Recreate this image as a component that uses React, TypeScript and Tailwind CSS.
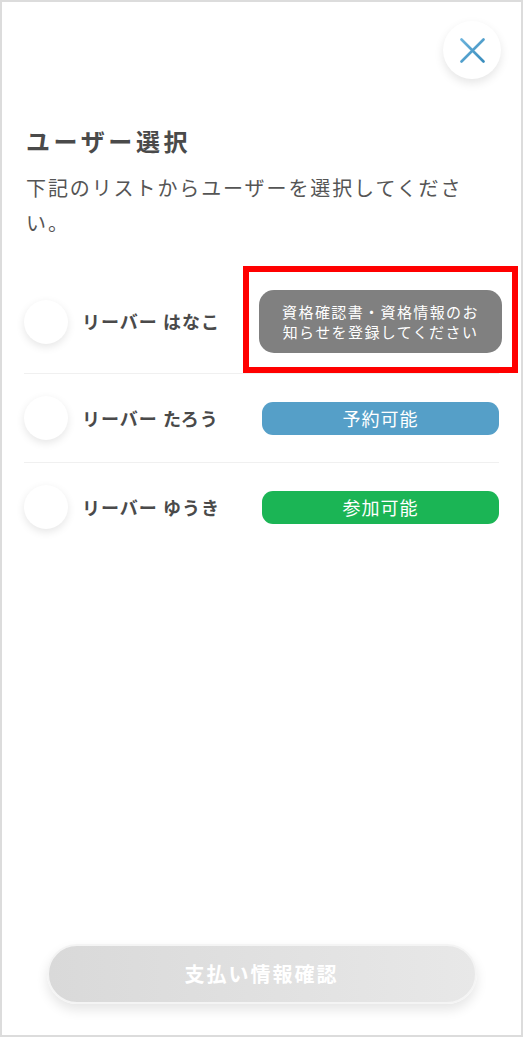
import React from "react";

const font = { fontFamily: '"Noto Sans CJK JP", "Noto Sans", sans-serif' };

function Radio() {
  return (
    <div className="w-[44px] h-[44px] shrink-0 rounded-full bg-white shadow-[0_3px_8px_rgba(0,0,0,0.10)]" />
  );
}

export default function App() {
  return (
    <div
      style={font}
      className="w-[523px] h-[1037px] border-2 border-[#dcdcdc] bg-white flex flex-col text-[#4a4a4a] overflow-hidden"
    >
      <div className="flex justify-end pt-[19px] pr-[20px]">
        <button className="w-[58px] h-[58px] rounded-full bg-white shadow-[0_4px_10px_rgba(0,0,0,0.10)] flex items-center justify-center">
          <svg width="25" height="25" viewBox="0 0 25 25">
            <defs>
              <linearGradient id="xg" x1="0" y1="0" x2="1" y2="1">
                <stop offset="0" stopColor="#6bb3dc" />
                <stop offset="1" stopColor="#3a8dbd" />
              </linearGradient>
            </defs>
            <path d="M1.5 1.5 L23.5 23.5 M23.5 1.5 L1.5 23.5" stroke="url(#xg)" strokeWidth="2.6" strokeLinecap="round" />
          </svg>
        </button>
      </div>

      <div className="px-[22px]">
        <h1 className="mt-[46px] text-[24px] leading-[32px] font-bold tracking-[3.6px] pl-[2px]">ユーザー選択</h1>
        <p className="mt-[13px] text-[20px] leading-[35px] tracking-[1.9px] max-w-[450px] text-[#555] pl-[2px]">
          下記のリストからユーザーを選択してください。
        </p>

        <div className="mt-[25px] flex flex-col">
          <div className="flex items-center pt-[25px] pb-[20px] border-b border-[#f0f0f0]">
            <Radio />
            <span className="ml-[14px] text-[18px] font-bold tracking-[1px] whitespace-nowrap">リーバー はなこ</span>
            <div className="ml-auto -mr-[3px] relative">
              <div className="w-[243px] h-[63px] rounded-[15px] bg-[#808080] text-white text-[15px] leading-[20px] tracking-[1.4px] flex items-center justify-center text-center px-[20px]">
                資格確認書・資格情報のお知らせを登録してください
              </div>
              <div className="absolute -left-[16px] -right-[16px] -top-[24px] -bottom-[20px] border-[6px] border-[#ff0000] pointer-events-none" />
            </div>
          </div>

          <div className="flex items-center py-[22px] border-b border-[#f0f0f0]">
            <Radio />
            <span className="ml-[14px] text-[18px] font-bold tracking-[1px] whitespace-nowrap">リーバー たろう</span>
            <div className="ml-auto w-[237px] h-[33px] rounded-[11px] bg-[#559fc8] text-white text-[18px] tracking-[1px] flex items-center justify-center">
              予約可能
            </div>
          </div>

          <div className="flex items-center py-[22px]">
            <Radio />
            <span className="ml-[14px] text-[18px] font-bold tracking-[1px] whitespace-nowrap">リーバー ゆうき</span>
            <div className="ml-auto w-[237px] h-[33px] rounded-[11px] bg-[#1bb555] text-white text-[18px] tracking-[1px] flex items-center justify-center">
              参加可能
            </div>
          </div>
        </div>
      </div>

      <div className="mt-auto mb-[31px] flex justify-center">
        <button className="w-[430px] h-[60px] rounded-full border-2 border-[#f4f4f4] bg-gradient-to-r from-[#d9d9d9] to-[#e8e8e8] shadow-[0_6px_12px_rgba(0,0,0,0.10)] text-white text-[20px] font-bold tracking-[2px]">
          支払い情報確認
        </button>
      </div>
    </div>
  );
}
